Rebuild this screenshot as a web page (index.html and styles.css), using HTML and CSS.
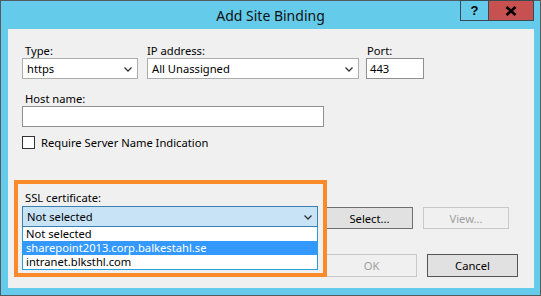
FILE: index.html
```html
<!DOCTYPE html>
<html>
<head>
<meta charset="utf-8">
<link rel="stylesheet" href="styles.css">
</head>
<body>
<div class="window">
  <div class="titlebar">
    <div class="title">Add Site Binding</div>
    <div class="caption-buttons">
      <div class="cap-btn help">?</div>
      <div class="cap-btn close">
        <svg width="12" height="10" viewBox="0 0 12 10"><path d="M1.5 1 L10.5 9 M10.5 1 L1.5 9" stroke="#000" stroke-width="2.6" fill="none"/></svg>
      </div>
    </div>
  </div>
  <div class="panel">
    <div class="row-top">
      <div class="field f-type">
        <div class="label">Type:</div>
        <div class="select"><span>https</span><svg class="chev" width="8" height="5" viewBox="0 0 8 5"><path d="M0.5 0.5 L4 4 L7.5 0.5" stroke="#333" stroke-width="1.3" fill="none"/></svg></div>
      </div>
      <div class="field f-ip">
        <div class="label">IP address:</div>
        <div class="select"><span>All Unassigned</span><svg class="chev" width="8" height="5" viewBox="0 0 8 5"><path d="M0.5 0.5 L4 4 L7.5 0.5" stroke="#333" stroke-width="1.3" fill="none"/></svg></div>
      </div>
      <div class="field f-port">
        <div class="label">Port:</div>
        <div class="input">443</div>
      </div>
    </div>
    <div class="field f-host">
      <div class="label">Host name:</div>
      <div class="input"></div>
    </div>
    <div class="check-row">
      <span class="checkbox"></span>
      <span class="check-label">Require Server Name Indication</span>
    </div>
    <div class="lower">
      <div class="ssl">
        <div class="label">SSL certificate:</div>
        <div class="select ssl-select"><span>Not selected</span><svg class="chev" width="8" height="5" viewBox="0 0 8 5"><path d="M0.5 0.5 L4 4 L7.5 0.5" stroke="#333" stroke-width="1.3" fill="none"/></svg></div>
        <div class="list">
          <div class="item">Not selected</div>
          <div class="item selected">sharepoint2013.corp.balkestahl.se</div>
          <div class="item">intranet.blksthl.com</div>
        </div>
      </div>
      <div class="actions">
        <div class="btn-row first">
          <div class="btn select-btn">Select...</div>
          <div class="btn disabled view-btn">View...</div>
        </div>
        <div class="btn-row second">
          <div class="btn disabled ok-btn">OK</div>
          <div class="btn cancel-btn">Cancel</div>
        </div>
      </div>
      <div class="highlight"></div>
    </div>
  </div>
</div>
</body>
</html>
```

FILE: styles.css
```css
* { box-sizing: border-box; }
html, body { margin: 0; padding: 0; }
body {
  width: 541px;
  height: 296px;
  overflow: hidden;
  font-family: "Segoe UI", "Noto Sans", sans-serif;
  font-size: 11.2px;
  color: #000;
}
.window {
  width: 541px;
  height: 296px;
  background: #65cbea;
  border: 1px solid #555c60;
  display: flex;
  flex-direction: column;
}
.titlebar {
  height: 28px;
  position: relative;
  display: flex;
  justify-content: center;
}
.title {
  font-size: 14px;
  line-height: 18px;
  padding-top: 6px;
  color: #111;
}
.caption-buttons {
  position: absolute;
  top: -1px;
  right: 6px;
  display: flex;
}
.cap-btn {
  height: 21px;
  border: 1px solid #3a4a52;
  display: flex;
  align-items: center;
  justify-content: center;
}
.help {
  width: 28px;
  border-right: none;
  font-weight: bold;
  font-size: 13px;
  font-family: "Liberation Sans", sans-serif;
}
.close {
  width: 46px;
  background: #c75050;
}
.panel {
  margin: 0 6px 0 7px;
  height: 259px;
  background: #f0f0f0;
  padding: 15px 0 0 14px;
}
.label {
  line-height: 14px;
  height: 14px;
  white-space: nowrap;
  padding-left: 3px;
}
.row-top {
  display: flex;
}
.f-type { width: 116px; }
.f-ip { width: 212px; margin-left: 9px; }
.f-ip .label { padding-left: 0; }
.f-port { width: 58px; margin-left: 7px; }
.f-port .label { padding-left: 1px; }
.select, .input {
  height: 21px;
  background: #fff;
  border: 1px solid #acacac;
  display: flex;
  align-items: center;
  padding-left: 4px;
  position: relative;
  line-height: 14px;
}
.input { border-color: #8f8f8f; padding-left: 3px; }
.chev { position: absolute; right: 5px; top: 8px; }
.f-host { margin-top: 13px; width: 302px; }
.check-row {
  margin-top: 9px;
  display: flex;
  align-items: center;
  height: 13px;
}
.checkbox {
  width: 13px;
  height: 13px;
  border: 1px solid #333;
  background: #fff;
}
.check-label { margin-left: 6px; line-height: 14px; }
.lower {
  margin-top: 42px;
  display: flex;
  position: relative;
}
.ssl { width: 296px; }
.ssl .label { margin-bottom: 1px; }
.ssl-select {
  background: #c8e3f6;
  border-color: #3c7fb1;
  height: 21px;
}
.list {
  border: 1px solid #26a0da;
  border-top: none;
  background: #fff;
}
.item {
  height: 14px;
  line-height: 14px;
  padding-left: 3px;
  white-space: nowrap;
}
.item.selected { background: #3399ff; color: #fff; }
.actions {
  margin-left: 8px;
  display: flex;
  flex-direction: column;
}
.btn-row { display: flex; gap: 10px; }
.btn-row.first { margin-top: 16px; }
.btn-row.second { margin-top: 25px; }
.btn {
  height: 22px;
  border: 1px solid #707070;
  background: #e1e1e1;
  display: flex;
  align-items: center;
  justify-content: center;
}
.select-btn { width: 87px; }
.view-btn { width: 86px; }
.ok-btn, .cancel-btn { width: 91px; height: 23px; }
.cancel-btn { border-color: #555; }
.btn.disabled {
  background: #f0f0f0;
  border-color: #c8c8c8;
  color: #a0a0a0;
}
.highlight {
  position: absolute;
  left: -8px;
  top: -11px;
  width: 313px;
  height: 97px;
  border: 4px solid #fb8a2b;
  pointer-events: none;
}
```
